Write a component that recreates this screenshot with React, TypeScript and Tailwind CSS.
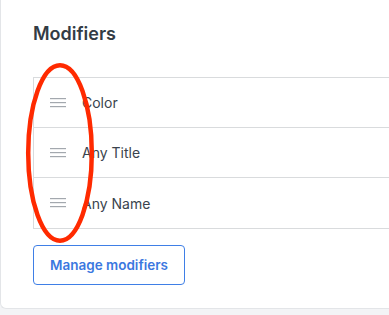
import React from "react";

const rows = ["Color", "Any Title", "Any Name"];

function Handle() {
  return (
    <svg width="16" height="10" viewBox="0 0 16 10" className="shrink-0">
      <rect x="0" y="0" width="16" height="1.2" fill="#a3a8ae" />
      <rect x="0" y="4" width="16" height="1.2" fill="#a3a8ae" />
      <rect x="0" y="8" width="16" height="1.2" fill="#a3a8ae" />
    </svg>
  );
}

export default function App() {
  return (
    <div
      className="relative w-[389px] h-[315px] overflow-hidden bg-[#f3f4f6]"
      style={{ fontFamily: "Inter, 'Noto Sans', sans-serif" }}
    >
      <div className="w-[420px] h-[309px] bg-white border-l border-b border-[#e3e5e8] rounded-bl-md pl-[32px] pt-[20px]">
        <h2 className="text-[18px] leading-[28px] font-semibold text-[#333c45]">Modifiers</h2>
        <div className="mt-[29px] border-b border-l border-[#d9dbdd]">
          {rows.map((r, i) => (
            <div
              key={r}
              className={`${i === 2 ? "h-[51px]" : "h-[50px]"} flex items-center gap-4 pl-4 border-t border-[#d9dbdd]`}
            >
              <Handle />
              <span className="text-[14px] text-[#3a434d]">{r}</span>
            </div>
          ))}
        </div>
        <button className="mt-4 h-[40px] w-[152px] border border-[#3f7fe6] rounded-[4px] text-[13.5px] font-semibold text-[#3b78e0]">
          Manage modifiers
        </button>
      </div>
      <svg className="absolute left-0 top-0 pointer-events-none" width="389" height="315">
        <ellipse cx="60" cy="153" rx="31.8" ry="87.8" fill="none" stroke="#ff2a00" strokeWidth="4.5" />
      </svg>
    </div>
  );
}
